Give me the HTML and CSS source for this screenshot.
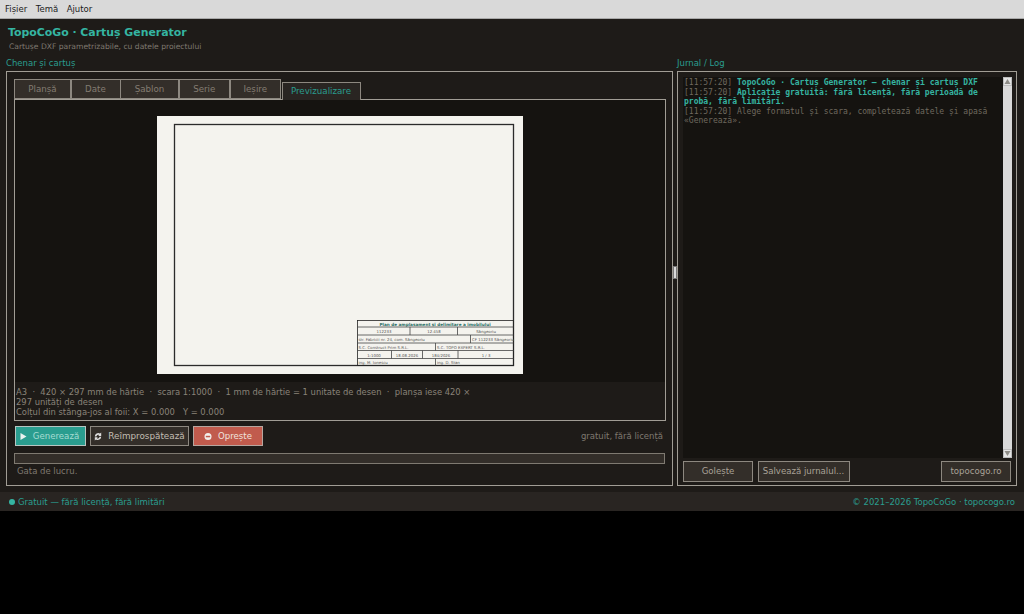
FILE: index.html
```html
<!DOCTYPE html>
<html lang="ro">
<head>
<meta charset="utf-8">
<title>TopoCoGo · Cartuș Generator</title>
<link rel="stylesheet" href="styles.css">
</head>
<body>
<div class="app">
  <nav class="menubar"><span>Fișier</span><span>Temă</span><span>Ajutor</span></nav>
  <header class="header">
    <h1>TopoCoGo · Cartuș Generator</h1>
    <p>Cartușe DXF parametrizabile, cu datele proiectului</p>
  </header>
  <main class="panes">
    <section class="left">
      <div class="group-label">Chenar și cartuș</div>
      <div class="group left-group">
        <div class="tabs">
          <div class="tab">Planșă</div>
          <div class="tab w2">Date</div>
          <div class="tab w3">Șablon</div>
          <div class="tab w4">Serie</div>
          <div class="tab w5">Ieșire</div>
          <div class="tab active">Previzualizare</div>
        </div>
        <div class="notebook">
          <div class="canvas">
            <svg class="sheet" width="366" height="258" viewBox="157 116 366 258">
              <rect x="157" y="116" width="366" height="258" fill="#f4f3ee"/>
              <rect x="174.5" y="124.5" width="339" height="241" fill="none" stroke="#2b2b2b" stroke-width="1.3"/>
              <g fill="none" stroke="#444" stroke-width=".8">
                <rect x="357.5" y="320.5" width="156" height="45" stroke="#222"/>
                <path d="M357.5 327h156M357.5 335h156M357.5 343h156M357.5 350.5h156M357.5 358.5h156"/>
                <path d="M410 327v8M457.500 327v8M470.500 335v8M435.500 343v7.500M391.500 350.500v8M422.500 350.500v8M458 350.500v8M435.500 358.500v7"/>
              </g>
              <g class="sheet-text">
                <text class="sheet-title" x="435" y="325.500">Plan de amplasament și delimitare a imobilului</text>
                <text class="mid" x="384" y="333">112233</text>
                <text class="mid" x="434" y="333">12.458</text>
                <text class="mid" x="486" y="333">Sângeoriu</text>
                <text x="358.500" y="341">str. Fabricii nr. 24, com. Sângeoriu</text>
                <text x="472" y="341">CF 112233 Sângeoriu</text>
                <text x="358.500" y="349">S.C. Construct Prim S.R.L.</text>
                <text x="437" y="349">S.C. TOPO EXPERT S.R.L.</text>
                <text class="mid" x="374" y="356.500">1:1000</text>
                <text class="mid" x="407" y="356.500">18.08.2026</text>
                <text class="mid" x="441" y="356.500">184/2026</text>
                <text class="mid" x="486" y="356.500">1 / 3</text>
                <text x="358.500" y="364">ing. M. Ionescu</text>
                <text x="437" y="364">ing. D. Stan</text>
              </g>
            </svg>
          </div>
          <div class="info">
            <div>A3 &nbsp;·&nbsp; 420 × 297 mm de hârtie &nbsp;·&nbsp; scara 1:1000 &nbsp;·&nbsp; 1 mm de hârtie = 1 unitate de desen &nbsp;·&nbsp; planșa iese 420 ×</div>
            <div>297 unități de desen</div>
            <div>Colțul din stânga-jos al foii: X = 0.000 &nbsp; Y = 0.000</div>
          </div>
        </div>
        <div class="actions">
          <button class="btn primary"><svg class="ico" width="7" height="9" viewBox="0 0 7 9"><path d="M.5 1l6 3.500-6 3.500z" fill="#eaf3f0"/></svg>Generează</button>
          <button class="btn refresh"><svg class="ico" width="8" height="9" viewBox="0 0 8 9"><path d="M.8 4.500A3.400 3.400 0 0 1 6 1.600L7.200 .6v3.300H4.200l1-1A2 2 0 0 0 2.400 4.500zM7.200 4.700A3.400 3.400 0 0 1 2 7.500L.8 8.500V5.200h3l-1 1A2 2 0 0 0 5.600 4.700z" fill="#ddd"/></svg>Reîmprospătează</button>
          <button class="btn danger"><svg class="ico" width="8" height="9" viewBox="0 0 8 9"><circle cx="4" cy="4.500" r="3.500" fill="#f2f0ec"/><rect x="1.800" y="3.800" width="4.400" height="1.500" fill="#c15b4d"/></svg>Oprește</button>
          <span class="free">gratuit, fără licență</span>
        </div>
        <div class="progress"></div>
        <div class="status">Gata de lucru.</div>
      </div>
    </section>
    <div class="sash"><i></i></div>
    <section class="right">
      <div class="group-label">Jurnal / Log</div>
      <div class="group right-group">
        <div class="log">
          <div class="log-text">
            <div><span class="ts">[11:57:20]</span> <b>TopoCoGo · Cartuș Generator — chenar și cartuș DXF</b></div>
            <div><span class="ts">[11:57:20]</span> <b>Aplicație gratuită: fără licență, fără perioadă de probă, fără limitări.</b></div>
            <div class="ts">[11:57:20] Alege formatul și scara, completează datele și apasă «Generează».</div>
          </div>
          <div class="scrollbar">
            <span class="arrow"><svg width="9" height="9" viewBox="0 0 9 9"><path d="M4.500 2l3 5h-6z" fill="#8d8b86"/></svg></span>
            <span class="thumb"></span>
            <span class="arrow"><svg width="9" height="9" viewBox="0 0 9 9"><path d="M4.500 7l3-5h-6z" fill="#8d8b86"/></svg></span>
          </div>
        </div>
        <div class="log-actions">
          <button class="btn b-clear">Golește</button>
          <button class="btn b-save">Salvează jurnalul...</button>
          <button class="btn b-site">topocogo.ro</button>
        </div>
      </div>
    </section>
  </main>
  <footer class="footer">
    <span class="dot-text"><i class="dot"></i>Gratuit — fără licență, fără limitări</span>
    <span>© 2021–2026 TopoCoGo · topocogo.ro</span>
  </footer>
</div>
</body>
</html>
```
FILE: styles.css
```css
* { box-sizing: border-box; }
html, body { margin: 0; height: 100%; background: #000; }
body { font: 8.500px/12px "DejaVu Sans", sans-serif; color: #8f887d; overflow: hidden; }
.app { width: 1024px; height: 511px; background: #1e1b18; display: flex; flex-direction: column; }

.menubar { height: 19px; flex: none; background: #d9d9d9; border-bottom: 1px solid #a9a9a9; color: #1c1c1c; display: flex; gap: 8.500px; padding: 3px 0 0 5px; font-size: 8.500px; }

.header { height: 33px; flex: none; padding: 7px 8px 0; }
.header h1 { margin: 0; font-size: 10.900px; line-height: 13px; font-weight: 700; color: #35b5a2; }
.header p { margin: 2px 0 0 1px; font-size: 7.600px; line-height: 11px; color: #7f7970; }

.panes { flex: none; height: 434px; display: flex; padding: 0 7px 0 6px; }
.left { width: 667px; flex: none; display: flex; flex-direction: column; }
.right { flex: 1; display: flex; flex-direction: column; min-width: 0; }
.group-label { height: 19px; flex: none; color: #2a9d8f; line-height: 12px; padding-top: 5px; }
.group { height: 415px; border: 1px solid #a19d95; }
.left-group { padding: 7px 6px 0 7px; display: flex; flex-direction: column; }

.sash { width: 4px; flex: none; position: relative; }
.sash i { position: absolute; left: 0; top: 214px; width: 4px; height: 13px; background: #d9d9d9; border: 1px solid #777; }

.tabs { height: 20px; flex: none; display: flex; align-items: flex-start; position: relative; z-index: 1; }
.tab { width: 57px; height: 20px; background: #332e29; border: 1px solid #8d8880; color: #837c72; text-align: center; line-height: 18px; margin-right: -.5px; font-size: 8.700px; }
.w2 { width: 50px; }
.w3 { width: 59px; }
.w4 { width: 51.500px; }
.w5 { width: 51.500px; }
.active { width: 79px; height: 18px; margin: 3px 0 0 1px; background: #292522; color: #2a9d8f; line-height: 16px; border-bottom: 0; }

.notebook { height: 322px; flex: none; border: 1px solid #a19d95; background: #1e1b18; display: flex; flex-direction: column; }
.canvas { height: 282px; flex: none; background: #151310; display: flex; justify-content: center; padding-top: 16px; }
.sheet { display: block; }
.sheet-text text { font-family: "DejaVu Sans", sans-serif; font-size: 3.900px; fill: #555; }
.sheet-text .mid { text-anchor: middle; }
.sheet-text .sheet-title { text-anchor: middle; font-weight: 700; font-size: 4.200px; fill: #2b6e66; }
.info { padding: 5px 0 0 1px; font-size: 8.400px; line-height: 10.200px; color: #8a8378; }

.actions { height: 30px; flex: none; display: flex; align-items: center; gap: 4px; padding: 0 3px 0 1px; }
.btn { height: 20.500px; margin: 0; padding: 0; border: 1px solid #8d8880; background: #332e29; color: #b4aea4; font: 8.600px/12px "DejaVu Sans", sans-serif; display: inline-flex; align-items: center; justify-content: center; }
.ico { margin-right: 6px; flex: none; }
.primary { width: 71px; background: #2a9d8f; color: #a6dcd2; border-color: #b6c5c1; padding-right: 2px; }
.refresh { width: 99px; color: #c3bdb3; font-size: 8.800px; }
.danger { width: 70px; background: #c15b4d; color: #f0e3de; border-color: #b6a69f; }
.free { margin-left: auto; color: #7f7970; }

.progress { height: 11px; flex: none; margin-top: 2px; background: #332e29; border: 1px solid #7f7a71; width: 651px; }
.status { padding: 1px 0 0 3px; color: #7f7970; line-height: 12px; }

.right-group { padding: 5px 4px 4px 5px; display: flex; flex-direction: column; }
.log { height: 381px; flex: none; background: #151310; display: flex; padding-left: 1px; }
.log-text { flex: 1; font: 8px/9.500px "DejaVu Sans Mono", monospace; color: #7a746b; padding-top: 1px; min-width: 0; }
.log-text b { color: #35b5a2; font-weight: 700; }
.ts { color: #6f695f; }
.scrollbar { width: 9px; flex: none; display: flex; flex-direction: column; background: #d9d9d9; }
.arrow { height: 9px; flex: none; background: #e4e4e4; border: 1px solid #bdbdbd; display: flex; }
.arrow svg { margin: -1px; }
.thumb { flex: 1; background: #d9d9d9; }

.log-actions { flex: none; height: 23px; display: flex; gap: 4.500px; padding: 3px 0 0 0; align-items: flex-start; }
.b-clear { width: 70px; color: #a9a297; }
.b-save { width: 92px; color: #a9a297; }
.b-site { width: 70px; margin-left: auto; margin-right: 1px; color: #a9a297; }

.footer { flex: 1; background: #292522; margin-top: 6px; display: flex; justify-content: space-between; align-items: center; padding: 0 9px 0 8px; color: #2a9d8f; }
.dot-text { display: flex; align-items: center; }
.dot { width: 6px; height: 6px; border-radius: 50%; background: #35b5a2; margin: 1px 3px 0 1px; }
```
